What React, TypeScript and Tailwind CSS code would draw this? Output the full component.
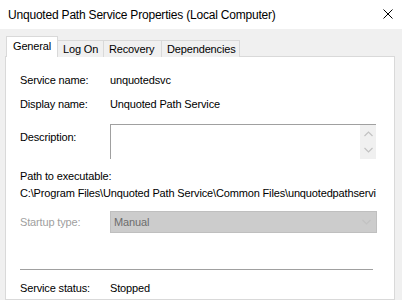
import React from "react";

const font = { fontFamily: '"Liberation Sans", Arial, sans-serif' };

function Chevron({ dir }: { dir: "up" | "down" }) {
  return (
    <svg width="9" height="6" viewBox="0 0 9 6" className="block">
      {dir === "up" ? (
        <polyline points="0.5,5 4.5,1 8.5,5" fill="none" stroke="#c2c2c2" strokeWidth="1.2" />
      ) : (
        <polyline points="0.5,1 4.5,5 8.5,1" fill="none" stroke="#c2c2c2" strokeWidth="1.2" />
      )}
    </svg>
  );
}

export default function App() {
  return (
    <div
      className="w-[402px] h-[300px] bg-[#f0f0f0] overflow-hidden flex flex-col text-[11px] tracking-[-0.15px] text-black"
      style={font}
    >
      {/* Title bar */}
      <div className="h-[29px] bg-white flex items-center justify-between pl-[8px] pr-[9px] shrink-0">
        <span className="text-[12px] tracking-[-0.2px] leading-none">
          Unquoted Path Service Properties (Local Computer)
        </span>
        <svg width="10" height="10" viewBox="0 0 10 10" className="block mt-[-2px]">
          <line x1="0.5" y1="0.5" x2="9.5" y2="9.5" stroke="#000" strokeWidth="1" />
          <line x1="9.5" y1="0.5" x2="0.5" y2="9.5" stroke="#000" strokeWidth="1" />
        </svg>
      </div>

      {/* Tabs */}
      <div className="flex items-end pl-[6px] mt-[7px] h-[21px] shrink-0 relative z-10">
        <div className="h-[21px] w-[52px] bg-white border border-b-0 border-[#d9d9d9] flex items-center pl-[6px] pb-[2px]">
          General
        </div>
        <div className="h-[17px] w-[46px] bg-[#f0f0f0] border border-l-0 border-b-0 border-[#d9d9d9] flex items-center pl-[5px]">
          Log On
        </div>
        <div className="h-[17px] w-[58px] bg-[#f0f0f0] border border-l-0 border-b-0 border-[#d9d9d9] flex items-center pl-[5px]">
          Recovery
        </div>
        <div className="h-[17px] w-[78px] bg-[#f0f0f0] border border-l-0 border-b-0 border-[#d9d9d9] flex items-center pl-[5px]">
          Dependencies
        </div>
      </div>

      {/* Panel */}
      <div className="ml-[5px] w-[390px] flex-1 bg-white border border-[#d9d9d9] -mt-[1px] pl-[14px] pt-[13px] flex flex-col">
        <div className="flex items-center h-[20px]">
          <span className="w-[90px]">Service name:</span>
          <span>unquotedsvc</span>
        </div>
        <div className="flex items-center h-[20px] mt-[4px]">
          <span className="w-[90px]">Display name:</span>
          <span>Unquoted Path Service</span>
        </div>
        <div className="flex mt-[10px]">
          <span className="w-[90px] mt-[3px] leading-[20px]">Description:</span>
          <div className="w-[266px] h-[35px] border-t border-l border-[#a0a0a0] flex justify-end">
            <div className="w-[16px] h-full bg-[#f0f0f0] flex flex-col items-center justify-between pt-[6px] pb-[6px]">
              <Chevron dir="up" />
              <Chevron dir="down" />
            </div>
          </div>
        </div>
        <div className="mt-[9px] leading-[16px]">Path to executable:</div>
        <div className="mt-[1px] leading-[16px] whitespace-nowrap">
          C:\Program Files\Unquoted Path Service\Common Files\unquotedpathservi
        </div>
        <div className="flex items-center mt-[10px]">
          <span className="w-[90px] text-[#a0a0a0]">Startup type:</span>
          <div className="w-[267px] h-[22px] bg-[#cccccc] border border-[#bfbfbf] flex items-center justify-between pl-[3px] pr-[5px]">
            <span className="text-[#6d6d6d]">Manual</span>
            <Chevron dir="down" />
          </div>
        </div>
        <div className="mt-[36px] w-[353px] h-px bg-[#a0a0a0]" />
        <div className="flex items-center h-[20px] mt-[8px]">
          <span className="w-[90px]">Service status:</span>
          <span>Stopped</span>
        </div>
      </div>
    </div>
  );
}
